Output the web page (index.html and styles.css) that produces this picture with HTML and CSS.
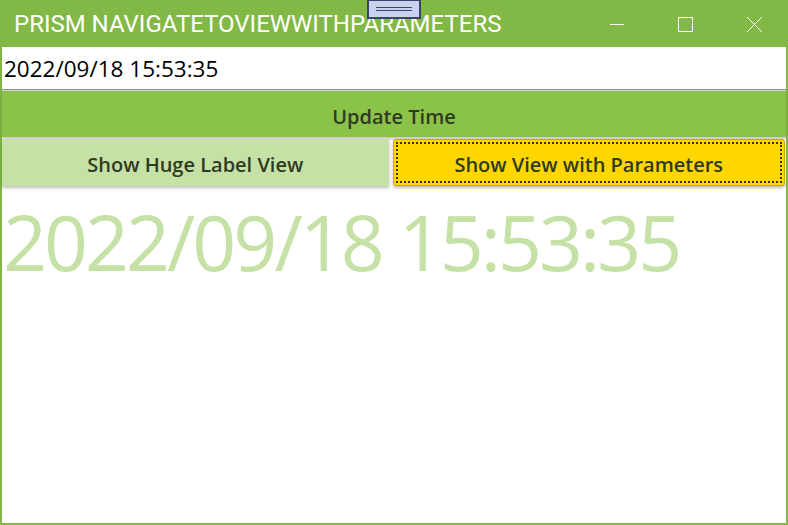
FILE: index.html
```html
<!DOCTYPE html>
<html lang="en">
<head>
  <meta charset="UTF-8">
  <title>Prism NavigateToViewWithParameters</title>
  <link rel="stylesheet" href="styles.css">
</head>
<body>
  <div class="window">
    <header class="titlebar">
      <div class="title">PRISM NAVIGATETOVIEWWITHPARAMETERS</div>
      <div class="caption-buttons">
        <div class="cap-btn">
          <svg width="16" height="16" viewBox="0 0 16 16"><path d="M2 8.5h14" stroke="#fff" stroke-width="1" fill="none"/></svg>
        </div>
        <div class="cap-btn">
          <svg width="16" height="16" viewBox="0 0 16 16"><rect x="1.5" y="1.5" width="14" height="14" stroke="#fff" stroke-width="1" fill="none"/></svg>
        </div>
        <div class="cap-btn">
          <svg width="16" height="16" viewBox="0 0 16 16"><path d="M1 1l15 15M16 1L1 16" stroke="#fff" stroke-width="1" fill="none"/></svg>
        </div>
      </div>
      <div class="grip">
        <span></span>
        <span></span>
      </div>
    </header>

    <div class="textbox">2022/09/18 15:53:35</div>

    <div class="btn update">Update Time</div>

    <div class="nav-row">
      <div class="btn nav light">Show Huge Label View</div>
      <div class="btn nav gold"><span class="focus">Show View with Parameters</span></div>
    </div>

    <div class="huge">2022/09/18 15:53:35</div>
  </div>
</body>
</html>
```

FILE: styles.css
```css
html, body {
  margin: 0;
  height: 100%;
}
body {
  font-family: 'Open Sans', 'Noto Sans', sans-serif;
  background-color: #ffffff;
}
.window {
  box-sizing: border-box;
  width: 788px;
  height: 525px;
  border: 2px solid #82b846;
  border-top: none;
  background-color: #ffffff;
  display: flex;
  flex-direction: column;
}
.titlebar {
  position: relative;
  height: 47px;
  margin: 0 -2px;
  background-color: #82b846;
  display: flex;
  align-items: center;
  justify-content: space-between;
}
.title {
  font-family: Roboto, sans-serif;
  font-size: 24px;
  color: #ffffff;
  padding-left: 14px;
}
.caption-buttons {
  display: flex;
  height: 100%;
}
.cap-btn {
  width: 69px;
  display: flex;
  align-items: center;
  justify-content: center;
}
.grip {
  position: absolute;
  left: 367px;
  top: 0;
  box-sizing: border-box;
  width: 54px;
  height: 19px;
  background-color: #c9d3ee;
  border: 2px solid #3b4470;
  border-top-width: 1px;
  display: flex;
  flex-direction: column;
  align-items: center;
  justify-content: center;
  gap: 2px;
}
.grip span {
  display: block;
  width: 36px;
  height: 1px;
  background-color: #3b4470;
}
.textbox {
  height: 42px;
  border-bottom: 1px solid #8c8c8c;
  box-shadow: 0 1px 1px rgba(0,0,0,0.15);
  display: flex;
  align-items: center;
  padding-left: 2px;
  font-size: 22.5px;
  color: #000000;
}
.btn {
  display: flex;
  align-items: center;
  justify-content: center;
  font-weight: 600;
  font-size: 20px;
  color: #2f3a22;
  box-shadow: 0 2px 3px rgba(0,0,0,0.25);
}
.update {
  box-sizing: border-box;
  height: 46px;
  margin-top: 1px;
  padding-top: 4px;
  background-color: #8bc34a;
}
.nav-row {
  display: flex;
  gap: 4px;
  margin-top: 2px;
}
.nav {
  box-sizing: border-box;
  height: 47px;
  flex: 1;
}
.light {
  padding-top: 4px;
  background-color: #c5e1a5;
}
.gold {
  background-color: #ffd600;
  border: 1px solid #c9a800;
  border-radius: 3px;
  padding: 2px;
  margin-right: 1px;
}
.focus {
  box-sizing: border-box;
  width: 100%;
  height: 100%;
  padding-top: 3px;
  border: 2px dotted #3a3200;
  display: flex;
  align-items: center;
  justify-content: center;
}
.huge {
  font-size: 77px;
  color: #c5e1a5;
  padding-left: 1px;
  margin-top: 3px;
  letter-spacing: -3px;
}
```
